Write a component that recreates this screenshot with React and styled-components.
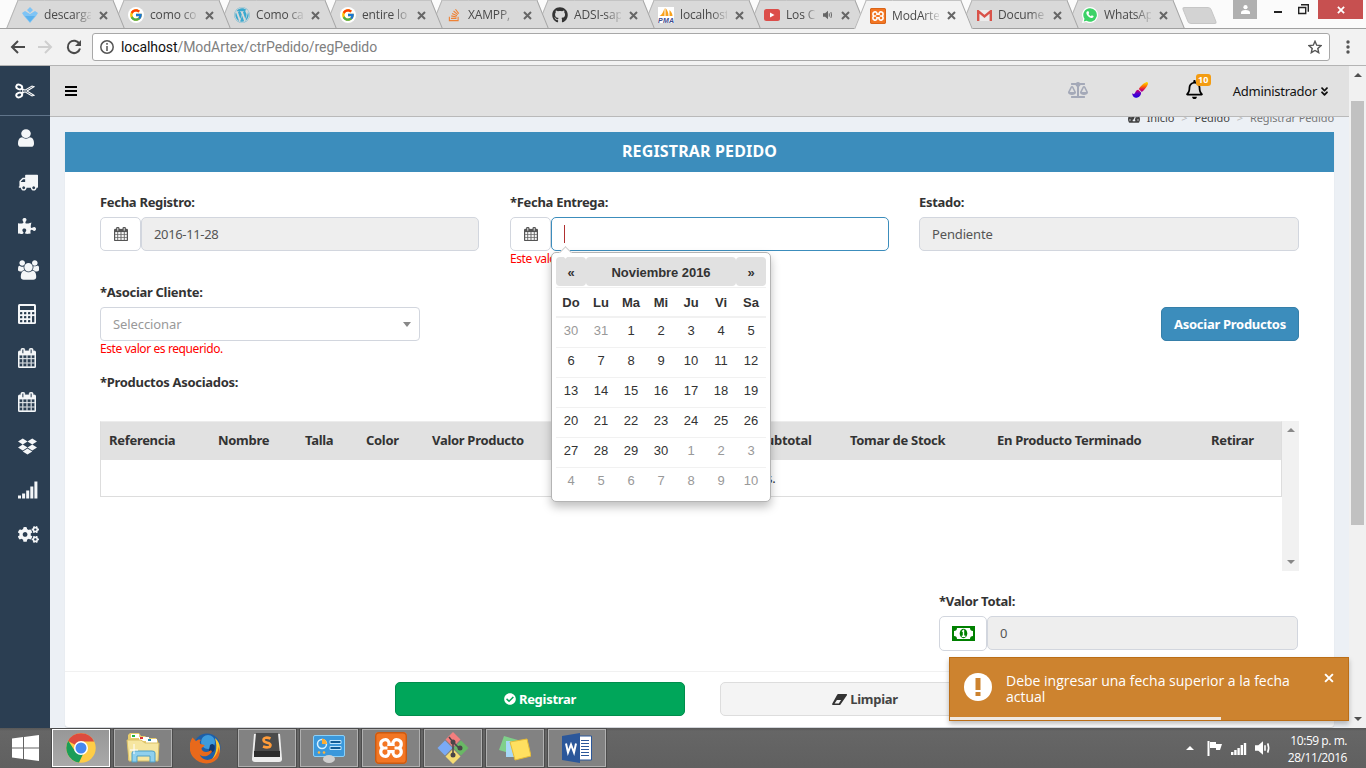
import React from "react";
import styled, { createGlobalStyle, css } from "styled-components";
import { FcGoogle } from "react-icons/fc";
import {
  FaWordpress, FaGithub, FaStackOverflow, FaPuzzlePiece, FaDropbox, FaCogs,
  FaBalanceScale, FaRegBell, FaAngleDoubleDown, FaCheckCircle, FaTachometerAlt,
} from "react-icons/fa";

const sans = `"Noto Sans", "Open Sans", sans-serif`;
const segoe = `"Open Sans", "Noto Sans", sans-serif`;

const Global = createGlobalStyle`
  * { box-sizing: border-box; }
  body { margin: 0; font-family: ${sans}; font-size: 13px; color: #333; overflow: hidden; }
  svg { display: block; flex: none; }
`;

/* ---------- browser frame ---------- */
const Screen = styled.div`
  width: 1366px; height: 768px; display: flex; flex-direction: column; overflow: hidden; background: #fff;
`;
const TabStrip = styled.div`
  height: 29px; flex: none; display: flex; padding-left: 6px; background: #fbfbfb;
  border-bottom: 1px solid #a0a0a0;
`;
const Tab = styled.div`
  position: relative; z-index: ${(p) => p.$z}; width: 119px; height: ${(p) => (p.$active ? 29 : 28)}px;
  margin-right: -13px; flex: none; display: flex; align-items: center; padding: 2px 0 0 16px;
  font: 12px ${segoe}; color: #4a4a4a;
  &::before, &::after {
    content: ""; position: absolute; z-index: -1; top: 0; bottom: 0; width: 68px;
    background: ${(p) => (p.$active ? "#f2f2f2" : "#d9d9d9")}; border-top: 1px solid #c4c4c4;
  }
  &::before { left: 6px; transform: skewX(-22deg); border-left: 1px solid #b4b4b4; }
  &::after { right: 6px; transform: skewX(22deg); border-right: 1px solid #a4a4a4; }
`;
const TabIcon = styled.span`
  width: 16px; height: 16px; margin-right: 6px; flex: none; display: grid; place-items: center;
`;
const TabText = styled.span`
  width: ${(p) => p.$w || 46}px; overflow: hidden; white-space: nowrap; line-height: 18px; flex: none;
  letter-spacing: -0.15px;
  mask-image: linear-gradient(90deg, #000 66%, rgba(0,0,0,.15));
`;
const CloseTab = styled.span`
  margin-left: 8px; flex: none;
`;
const NewTab = styled.div`
  width: 29px; height: 17px; margin: 7px 0 0 13px; border: 1px solid #c6c6c6; background: #d3d3d3;
  border-radius: 3px; transform: skewX(22deg);
`;
const WindowButtons = styled.div`
  margin-left: auto; margin-right: 3px; display: flex; align-items: flex-start;
`;
const UserBtn = styled.div`
  width: 24px; height: 19px; background: #b0b0b0; display: grid; place-items: center;
`;
const PlainBtn = styled.div`
  width: ${(p) => p.$w}px; height: 19px; display: flex; justify-content: flex-end; align-items: center;
`;
const CloseBtn = styled.div`
  width: 45px; height: 19px; margin-left: 9px; background: #c75050; display: grid; place-items: center;
`;
const Toolbar = styled.div`
  height: 37px; flex: none; display: flex; align-items: center; background: #f2f2f2;
  border-bottom: 1px solid #b4b4b4; padding: 0 13px 0 10px;
`;
const NavIcon = styled.span`
  width: 28px; flex: none;
`;
const Omnibox = styled.div`
  height: 28px; width: 1238px; margin: 0 auto 0 -2px; background: #fff; border: 1px solid #a8a8a8; border-radius: 3px;
  display: flex; align-items: center; padding: 0 7px;
  font: 14px Roboto, sans-serif; color: #808080; letter-spacing: -0.08px;
`;
const Url = styled.span`
  margin-left: 7px; flex: 1;
  b { font-weight: 400; color: #111; }
`;

/* ---------- page ---------- */
const Page = styled.div`
  height: 662px; flex: none; display: flex; overflow: hidden; background: #ecf0f5; position: relative;
`;
const Sidebar = styled.nav`
  width: 50px; flex: none; background: #2b3e52; color: #f4f6f8; display: flex; flex-direction: column;
`;
const SideLogo = styled.div`
  height: 50px; border-bottom: 1px solid #60748a; display: grid; place-items: center; flex: none;
`;
const SideItem = styled.div`
  height: 44px; display: flex; align-items: center; padding-left: 18px;
`;
const Main = styled.main`
  width: 1299px; flex: none; display: flex; flex-direction: column;
`;
const Header = styled.header`
  position: relative; z-index: 2; height: 51px; flex: none; background: #e1e1e1; border-bottom: 1px solid #b9b9b9;
  display: flex; align-items: center; padding: 0 19px 0 15px;
`;
const Spacer = styled.div` flex: 1; `;
const HeadIcon = styled.span`
  position: relative; margin-right: ${(p) => p.$mr}px; margin-top: -3px;
`;
const Badge = styled.span`
  position: absolute; left: 11px; top: -6px; width: 15px; height: 12px; border-radius: 3px; background: #f39c12;
  color: #fff; font: bold 9px/12px ${sans}; text-align: center;
`;
const UserName = styled.span`
  font-size: 13px; letter-spacing: -0.27px; color: #111; display: flex; align-items: center; gap: 2px; line-height: 20px;
`;
const Crumbs = styled.div`
  height: 16px; margin: -7px 15px 6px 0; flex: none; display: flex; justify-content: flex-end; align-items: center;
  font-size: 11px; line-height: 16px; letter-spacing: -0.1px; color: #444;
  i { font-style: normal; color: #bbb; margin: 0 7px; }
  em { font-style: normal; color: #777; }
  svg { margin-right: 7px; }
`;
const Box = styled.section`
  margin: 0 15px; height: 595px; flex: none; background: #fff; border-radius: 0 0 3px 3px;
  box-shadow: 0 1px 1px rgba(0,0,0,.12);
`;
const BoxTitle = styled.h3`
  margin: 0; height: 40px; background: #3c8dbc; color: #fff; text-align: center;
  font: bold 16px/38px ${sans}; letter-spacing: 0.15px;
`;
const BoxBody = styled.div`
  height: 499px; padding: 19px 35px 0;
`;
const Columns = styled.div`
  display: flex; height: 90px; column-gap: 31px;
`;
const Field = styled.div`
  position: relative; width: ${(p) => p.$w || 379}px; flex: none;
  &:last-child { margin-left: -1px; }
`;
const Label = styled.label`
  display: block; height: 26px; line-height: 22px; font-weight: bold; font-size: 13px; letter-spacing: -0.3px;
  white-space: nowrap;
`;
const Group = styled.div` display: flex; height: 34px; `;
const Addon = styled.span`
  width: ${(p) => p.$w || 41}px; height: ${(p) => p.$h || 34}px; border: 1px solid #d2d6de; border-radius: 5px; background: #fff; color: #555;
  display: grid; place-items: center; flex: none;
`;
const Input = styled.div`
  flex: 1; height: 34px; padding: 0 12px; border: 1px solid #d2d6de; border-radius: 5px; background: #eee; color: #555;
  font-size: 13px; line-height: 32px; letter-spacing: ${(p) => p.$ls || -0.15}px;
  ${(p) => p.$focus && css`background: #fff; border-color: #3c8dbc;`}
`;
const Caret = styled.span`
  display: block; width: 1px; height: 18px; margin-top: 7px; background: #b03030;
`;
const ErrorText = styled.div`
  color: #f00; font-size: 12px; line-height: 16px; letter-spacing: -0.4px; white-space: nowrap;
`;
const ClientRow = styled.div`
  display: flex; justify-content: space-between; height: 90px;
`;
const Select = styled.div`
  width: 320px; height: 34px; border: 1px solid #d2d6de; border-radius: 4px; background: #fff; color: #999;
  display: flex; align-items: center; justify-content: space-between; padding: 0 8px 0 12px; letter-spacing: -0.1px;
`;
const Arrow = styled.span`
  border: ${(p) => p.$s || 4}px solid transparent; flex: none; width: 0; height: 0;
  ${(p) => p.$up
    ? css`border-top: 0; border-bottom-color: ${p.$c || "#888"};`
    : css`border-bottom: 0; border-top-color: ${p.$c || "#888"};`}
  ${(p) => p.$tall && css`border-top-width: 5px;`}
`;
const Button = styled.div`
  width: ${(p) => p.$w}px; height: 34px; border-radius: 5px; display: flex; align-items: center; justify-content: center; gap: 3px;
  font-weight: bold; font-size: 13px; letter-spacing: -0.28px; border: 1px solid; flex: none;
  ${(p) => ({
    blue: css`background: #3c8dbc; border-color: #367fa9; color: #fff; margin-top: 26px;`,
    green: css`background: #00a65a; border-color: #008d4c; color: #fff;`,
    gray: css`background: #f4f4f4; border-color: #ddd; color: #444;`,
  })[p.$tone]}
`;
const TableArea = styled.div`
  display: flex; height: 150px; margin-top: 24px; width: 1199px;
`;
const Table = styled.div`
  width: 1182px; height: 76px; border: 1px solid #ddd; border-top-color: #ececec;
`;
const HeadRow = styled.div`
  display: grid; grid-template-columns: 109px 87px 61px 66px 130px 197px 91px 147px 214px 1fr;
  height: 38px; background: #e1e1e1; line-height: 36px; font-weight: bold; letter-spacing: -0.3px; white-space: nowrap;
  span { padding-left: 8px; }
`;
const EmptyRow = styled.div`
  height: 36px; line-height: 36px; text-align: center; letter-spacing: -0.25px;
`;
const InnerScroll = styled.div`
  width: 17px; background: #f1f1f1; display: flex; flex-direction: column; justify-content: space-between; align-items: center; padding: 7px 0;
`;
const TotalBlock = styled.div`
  width: 359px; margin: 19px 0 0 839px;
`;
const BoxFooter = styled.div`
  height: 56px; border-top: 1px solid #f1f1f1; padding: 10px 0 0 330px; display: flex; gap: 35px;
`;
const PageScroll = styled.div`
  width: 17px; background: #f1f1f1; display: flex; flex-direction: column; align-items: center; padding: 7px 0;
  flex: none;
`;
const Thumb = styled.div`
  width: 13px; height: 424px; margin: 24px 0 auto; background: #c1c1c1;
`;

/* ---------- floating calendar ---------- */
const Picker = styled.div`
  position: absolute; z-index: 3; left: 41px; top: 61px; width: 220px; height: 250px; background: #fff; border: 1px solid #b4b4b4;
  border-radius: 5px; padding: 4px; box-shadow: 0 5px 10px rgba(0,0,0,.25);
  font: 13px "Liberation Sans", Arial, sans-serif; color: #333;
  &::before {
    content: ""; position: absolute; width: 8px; height: 8px; left: 9px; top: -5px; background: #fff;
    border: solid #ccc; border-width: 1px 0 0 1px; transform: rotate(45deg);
  }
`;
const MonthRow = styled.div`
  display: grid; grid-template-columns: 30px 150px 30px; height: 30px; font-weight: bold; text-align: center; line-height: 31px;
  letter-spacing: -0.05px;
  span { background: #e1e1e1; border-radius: 4px; height: 29px; }
`;
const Days = styled.div`
  display: grid; grid-template-columns: repeat(7, 30px); height: 30px; line-height: 26px; text-align: center;
  border-top: 1px solid #f1f1f1;
  ${(p) => p.$head && css`font-weight: bold; border-bottom: 1px solid #f1f1f1; line-height: 29px;`}
`;
const Day = styled.span` color: ${(p) => (p.$muted ? "#999" : "#333")}; `;

/* ---------- notification ---------- */
const Toast = styled.div`
  position: absolute; z-index: 4; left: 949px; top: 591px; width: 400px; height: 64px; background: #cd832f; border: 1px solid #bb6e17;
  color: #fff; display: flex; justify-content: space-between; padding: 15px 14px 0 14px; box-shadow: 0 3px 5px rgba(0,0,0,.25);
  font: 14px/16px ${segoe};
`;
const ToastText = styled.div`
  width: 304px; letter-spacing: 0;
`;
const Progress = styled.div`
  position: absolute; left: 0; bottom: 0; height: 3px; width: 271px; background: #f0e9e2;
`;

/* ---------- taskbar ---------- */
const Taskbar = styled.div`
  height: 40px; flex: none; display: flex; align-items: center; gap: 4px; background: linear-gradient(#575757, #666 3px, #606060);
  color: #fff;
`;
const Start = styled.div` width: 48px; padding-left: 12px; `;
const Task = styled.div`
  width: 58px; height: 38px; display: grid; place-items: center; border: 1px solid transparent;
  ${(p) => p.$open && css`background: #828282; border-color: #b0b0b0; outline: 1px solid #4c4c4c;`}
  ${(p) => p.$active && css`background: linear-gradient(#979797, #a9a9a9); border-color: #fff;`}
`;
const Tray = styled.div` margin-left: auto; display: flex; align-items: center; gap: 8px; `;
const TrayArrow = styled.span` margin-right: 5px; `;
const Clock = styled.div`
  width: 66px; margin: 2px 19px 0 2px; font: 12px/17px ${segoe}; letter-spacing: -0.45px; text-align: right; white-space: nowrap;
`;

/* ---------- drawings ---------- */
const X = ({ s = 9, c = "#666", w = 2 }) => (
  <svg width={s} height={s} viewBox="0 0 9 9"><path d="M1 1l7 7M8 1L1 8" stroke={c} strokeWidth={w} fill="none" /></svg>
);
const Calendar = ({ w = 15, h = w, c = "currentColor" }) => (
  <svg width={w} height={h} viewBox="64 0 1664 1792" preserveAspectRatio="none" fill={c} stroke={c} strokeWidth="30">
    <path d="M192 1664h288v-288h-288v288zm352 0h320v-288h-320v288zm-352-352h288v-320h-288v320zm352 0h320v-320h-320v320zm-352-384h288v-288h-288v288zm736 736h320v-288h-320v288zm-384-736h320v-288h-320v288zm768 736h288v-288h-288v288zm-384-352h320v-320h-320v320zm-352-864v-288q0-13-9.5-22.5t-22.5-9.5h-64q-13 0-22.5 9.5t-9.5 22.5v288q0 13 9.5 22.5t22.5 9.5h64q13 0 22.5-9.5t9.5-22.5zm736 864h288v-320h-288v320zm-384-384h320v-288h-320v288zm384 0h288v-288h-288v288zm32-480v-288q0-13-9.5-22.5t-22.5-9.5h-64q-13 0-22.5 9.5t-9.5 22.5v288q0 13 9.5 22.5t22.5 9.5h64q13 0 22.5-9.5t9.5-22.5zm384-64v1280q0 52-38 90t-90 38h-1408q-52 0-90-38t-38-90v-1280q0-52 38-90t90-38h128v-96q0-66 47-113t113-47h64q66 0 113 47t47 113v96h384v-96q0-66 47-113t113-47h64q66 0 113 47t47 113v96h128q52 0 90 38t38 90z" />
  </svg>
);
const Scissors = () => (
  <svg width="20" height="16" viewBox="0 0 20 16" fill="none" stroke="#fff">
    <ellipse cx="4.2" cy="4" rx="3" ry="2.2" strokeWidth="2" transform="rotate(20 4.2 4)" />
    <ellipse cx="4.2" cy="12" rx="3" ry="2.2" strokeWidth="2" transform="rotate(-20 4.2 12)" />
    <path d="M7 5.500l3 1.700 7-4.200 2 .8-7 4.200 7 4.200-2 .8-7-4.200-3 1.700M7 5.500l1 2.500-1 2.500" strokeWidth="1.100" />
  </svg>
);
const User = () => (
  <svg width="16" height="18" viewBox="256 110 1280 1570" preserveAspectRatio="none" fill="currentColor">
    <path d="M1536 1399q0 109-62.5 187t-150.5 78h-854q-88 0-150.5-78t-62.5-187q0-85 8.5-160.5t31.5-152 58.5-131 94-89 134.5-34.5q131 128 313 128t313-128q76 0 134.5 34.5t94 89 58.5 131 31.5 152 8.5 160.5zm-256-887q0 159-112.5 271.5t-271.5 112.5-271.5-112.5-112.5-271.5 112.5-271.5 271.5-112.5 271.5 112.5 112.5 271.5z" />
  </svg>
);
const Truck = () => (
  <svg width="20" height="20" viewBox="0 0 1792 1792" fill="currentColor">
    <path d="M640 1408q0-52-38-90t-90-38-90 38-38 90 38 90 90 38 90-38 38-90zm-384-512h384v-256h-158q-13 0-22 9l-195 195q-9 9-9 22v30zm1280 512q0-52-38-90t-90-38-90 38-38 90 38 90 90 38 90-38 38-90zm256-1088v1024q0 15-4 26.5t-13.5 18.5-16.5 11.5-23.5 6-22.5 2-25.5 0-22.5-.5q0 106-75 181t-181 75-181-75-75-181h-384q0 106-75 181t-181 75-181-75-75-181h-64q-3 0-22.5.5t-25.5 0-22.5-2-23.5-6-16.5-11.5-13.5-18.5-4-26.5q0-26 19-45t45-19v-320q0-8-.5-35t0-38 2.5-34.5 6.5-37 14-30.5 22.5-30l198-198q19-19 50.5-32t58.5-13h160v-192q0-26 19-45t45-19h1024q26 0 45 19t19 45z" />
  </svg>
);
const Users = () => (
  <svg width="21" height="20" viewBox="0 0 1920 1792" fill="currentColor">
    <path d="M593 896q-162 5-265 128h-134q-82 0-138-40.5t-56-118.5q0-353 124-353 6 0 43.5 21t97.5 42.5 119 21.5q67 0 133-23-5 37-5 66 0 159 93 293zm1071 637q0 120-73 189.5t-194 69.5h-874q-121 0-194-69.5t-73-189.5q0-53 3.5-103.5t14-109 26.5-108.5 43-97.5 62-81 85.5-53.5 111.5-20q10 0 43 21.5t73 48 107 48 135 21.5 135-21.5 107-48 73-48 43-21.5q61 0 111.5 20t85.5 53.5 62 81 43 97.5 26.5 108.5 14 109 3.5 103.5zm-1024-1277q0 106-75 181t-181 75-181-75-75-181 75-181 181-75 181 75 75 181zm704 384q0 159-112.5 271.5t-271.5 112.5-271.5-112.5-112.5-271.5 112.5-271.5 271.5-112.5 271.5 112.5 112.5 271.5zm576 225q0 78-56 118.5t-138 40.5h-134q-103-123-265-128 93-134 93-293 0-29-5-66 66 23 133 23 59 0 119-21.5t97.5-42.5 43.5-21q124 0 124 353zm-128-609q0 106-75 181t-181 75-181-75-75-181 75-181 181-75 181 75 75 181z" />
  </svg>
);
const Calculator = () => (
  <svg width="18" height="20" viewBox="0 0 18 20">
    <rect width="18" height="20" rx="1.5" fill="#f4f6f8" />
    <g fill="#2c3e50">
      <rect x="2" y="2" width="14" height="4" />
      {[8, 12, 16].map((y) => [2, 6, 10].map((x) => <rect key={`${x}-${y}`} x={x} y={y} width="2.3" height="2.3" rx=".6" />))}
      <rect x="14" y="8" width="2.3" height="2.3" rx=".6" /><rect x="14" y="12" width="2.3" height="6.3" rx=".6" />
    </g>
  </svg>
);
const Signal = () => (
  <svg width="20" height="18" viewBox="0 0 20 18" fill="currentColor">
    {[3, 5, 8, 12, 17].map((h, i) => <rect key={h} x={i * 4.1} y={17.5 - h} width="3" height={h} />)}
  </svg>
);
const Brush = () => (
  <svg width="16" height="16" viewBox="0 0 16 16">
    <defs><linearGradient id="paint" gradientUnits="userSpaceOnUse" x1="0" y1="0" x2="0" y2="16">
      <stop offset="0" stopColor="#ffe600" /><stop offset=".28" stopColor="#ff6a00" /><stop offset=".5" stopColor="#d0006a" /><stop offset=".72" stopColor="#5a00c8" /><stop offset="1" stopColor="#1b00e0" />
    </linearGradient></defs>
    <path d="M14 .2c1.600-.5 2.400.8 1.800 2.200-1 2.200-3.700 6-6 7.600L6.800 7C8.300 4.500 11.700 1 14 .2zM6.200 7.700l2.900 2.700C9.200 14 6.500 16 3.700 15.800 1.400 15.600.3 13.500.1 11.300c1.800 1.200 2.600.6 3.200-1 .5-1.300 1.500-2.500 2.900-2.600z" fill="url(#paint)" />
  </svg>
);
const Eraser = () => (
  <svg width="15" height="11" viewBox="0 0 15 11"><path d="M6 0h8.500q.8.400.4 1.200L8.500 10.500q-.4.500-1 .5H.7q-.8-.4-.5-1.200L5.300.5zM2.600 9.400h4.200l2.300-3.300H4.900z" fill="#333" fillRule="evenodd" /></svg>
);
const Money = () => (
  <svg width="23" height="15" viewBox="0 0 23 15">
    <rect width="23" height="15" fill="#008000" />
    <path d="M5 2h13a3 3 0 003 3v5a3 3 0 00-3 3H5a3 3 0 00-3-3V5a3 3 0 003-3z" fill="#fff" />
    <ellipse cx="11.500" cy="7.500" rx="3.800" ry="4.700" fill="#008000" />
    <path d="M10 5.500l1.500-1v5.500M9.800 10.300h3.600" stroke="#fff" strokeWidth="1.400" fill="none" />
  </svg>
);
const Drop = () => (
  <svg width="16" height="16" viewBox="0 0 16 16" fill="#7fc4f5">
    <path d="M8 0l3 3-3 3-3-3zM0 6l3-2 5 3 5-3 3 2-2 3-6 7-6-7z" /><path d="M3 9h10l-5 6z" fill="#5cb2ee" />
  </svg>
);
const Pma = () => (
  <svg width="16" height="16" viewBox="0 0 16 16">
    <rect width="16" height="16" fill="#fff" /><path d="M6.500 1v8H1.500c2-1 4-4 5-8zM7.500 1c2 2 3 5 3 8h-3zM11.500 3c2 2 3 4 3 6h-3z" fill="#f8a11c" />
    <text x="0" y="16" fontSize="7" fontWeight="bold" fontStyle="italic" fontFamily="Liberation Sans" fill="#3c4a8c" textLength="16">PMA</text>
  </svg>
);
const YouTube = () => (
  <svg width="16" height="12" viewBox="0 0 16 12"><rect width="16" height="12" rx="2.500" fill="#dc4e4a" /><path d="M6 3.500v5l4.500-2.500z" fill="#fff" /></svg>
);
const Xampp = ({ s = 16 }) => (
  <svg width={s} height={s} viewBox="0 0 32 32">
    <rect width="32" height="32" rx="4" fill="#f37623" /><rect x=".7" y=".7" width="30.600" height="30.600" rx="3.500" fill="none" stroke="#c85a12" strokeWidth="1.400" />
    <path d="M8 16C5 14.500 4.800 9.500 8.500 8c3.500-1.200 6 1 5.500 4.500h4C17.500 9 20 6.800 23.500 8c3.700 1.500 3.500 6.500.5 8 3 1.500 3.200 6.500-.5 8-3.500 1.200-6-1-5.500-4.500h-4c.5 3.500-2 5.700-5.500 4.500C4.800 22.500 5 17.500 8 16zM9.500 16h3M19.500 16h3" fill="none" stroke="#fff" strokeWidth="3.200" />
  </svg>
);
const Gmail = () => (
  <svg width="15" height="11" viewBox="0 0 15 11"><rect width="15" height="11" rx="1" fill="#ececec" /><path d="M1.200 11V1.200L7.500 6.500l6.300-5.300V11" fill="none" stroke="#d9534a" strokeWidth="2.400" /></svg>
);
const WhatsIcon = () => (
  <svg width="16" height="16" viewBox="0 0 16 16"><path d="M8 0a8 8 0 110 16c-1.500 0-2.600-.3-3.800-1L0 16l1.100-4A8 8 0 018 0z" fill="#fff" /><path d="M8 1.200a6.800 6.800 0 11-3.500 12.600l-2.700.7.700-2.700A6.800 6.800 0 018 1.200z" fill="#3cd267" /><path d="M5.300 4.200l1.200.1.700 1.800-.7.900c.6 1.100 1.300 1.700 2.400 2.200l.9-1 1.800.9c0 1.500-1.200 2.200-2.500 1.900C6.600 10.400 4.500 8 4.300 6c0-.8.400-1.400 1-1.800z" fill="#fff" /></svg>
);
const GoogleIcon = () => (
  <svg width="16" height="16" viewBox="0 0 16 16"><circle cx="8" cy="8" r="8" fill="#fff" /><FcGoogle x="1" y="1" size={14} /></svg>
);
const Speaker = ({ c = "#666", s = 11 }) => (
  <svg width={s} height={s} viewBox="0 0 12 12"><path d="M0 4h2.500L6 1v10L2.500 8H0z" fill={c} /><path d="M7.500 4v4M9.500 2.500q1.500 3.500 0 7" stroke={c} fill="none" strokeWidth="1.200" /></svg>
);
const Chrome = () => (
  <svg width="30" height="30" viewBox="0 0 30 30">
    <circle cx="15" cy="15" r="14.700" fill="#ffcd46" />
    <path d="M15 15L2 8A14.700 14.700 0 0128.200 8.500H15z" fill="#dd4b3e" />
    <path d="M2.200 7.800L9.300 18.500l8 2L13 29.600A14.700 14.700 0 012.200 7.800z" fill="#1b9d58" />
    <circle cx="15" cy="15" r="7" fill="#fff" /><circle cx="15" cy="15" r="5.500" fill="#4688f1" />
  </svg>
);
const Folder = () => (
  <svg width="34" height="32" viewBox="0 0 34 32">
    <path d="M2 3l2-2h9l2 3h4l2 2h9l2 3v19H2z" fill="#e8cd6c" />
    <path d="M5 2h8v4H5zM13 5h10v4H13zM20 7h11v4H20z" fill="#fff" /><path d="M6 3h3v2H6z" fill="#1db33b" /><path d="M14 5h3v2h-3z" fill="#d33" /><path d="M22 7h3v2h-3z" fill="#28a" />
    <path d="M1 8h14l4 3h14l-1 18H3z" fill="#f6e6a0" stroke="#d9bf66" />
    <path d="M6 30V21q0-2 3-2h17q3 0 3 2v9h-5v-6H11v6z" fill="#8fd0ee" stroke="#4f9fc4" />
    <path d="M8 12v10M4 18h8" stroke="#fff" />
  </svg>
);
const Firefox = () => (
  <svg width="31" height="31" viewBox="0 0 31 31">
    <circle cx="17" cy="14" r="13.500" fill="#1d5fa8" /><circle cx="18" cy="9" r="7" fill="#3d9bdc" /><path d="M20 12c4-3 6 2 4 6l-6 4z" fill="#123a70" />
    <path d="M25 5c6 5 6 13 3 18-2 4-6 6-10 7 8-6 10-15 7-25z" fill="#fdc92f" />
    <path d="M3 5l3 3c1.500-1.500 4-2 5-1-1.500 1-1.500 3-.5 4l4 1c0 2-3 2-3 4 1 3 5 4 8 2 1.500-1 3 0 2 1.500-4 5-10 4.500-12 2 3 7 12 7 16 1 2-3 3-6 3-9 2 5 1 10-2 13-6 6-17 5-23-2-5-6-5-14-1-20z" fill="#e8691b" />
  </svg>
);
const Sublime = () => (
  <svg width="32" height="30" viewBox="0 0 32 30">
    <path d="M3 1h26l2 25q0 3-3 3H4q-3 0-3-3z" fill="#eee" /><path d="M5 0h22l2 22H3z" fill="#4b4b4b" /><path d="M3 18h26v6H3z" fill="#2d2d2d" />
    <path d="M19.500 5.500C16 4 12.500 4.500 12.500 7c0 3.500 7 2 7 5 0 2.700-4 2.900-7.500 1.500" fill="none" stroke="#ff9c3a" strokeWidth="2.600" />
  </svg>
);
const Panel = () => (
  <svg width="32" height="29" viewBox="0 0 32 29">
    <rect x=".5" y="1.500" width="31" height="21" rx="1.500" fill="#3b98db" stroke="#8bd0f8" />
    <circle cx="9" cy="10" r="4.500" fill="none" stroke="#d4f0ff" strokeWidth="1.500" /><path d="M9 10V4.500a5.500 5.500 0 015 5.500z" fill="#ffad33" />
    <path d="M17 6.500h11v3H17zM17 12.500h11v3H17z" fill="#115c96" stroke="#bfe6ff" /><circle cx="6" cy="18.500" r="1.300" fill="#ffb33a" /><circle cx="11" cy="18.500" r="1.300" fill="#ffb33a" />
    <ellipse cx="16" cy="25" rx="6" ry="4" fill="#cfcfcf" />
  </svg>
);
const Git = () => (
  <svg width="32" height="32" viewBox="0 0 32 32">
    <path d="M16 0l7.500 7.500L16 15 8.500 7.500z" fill="#f47e7e" /><path d="M8 8.500l7.500 7.500L8 23.500.5 16z" fill="#7aaaf5" /><path d="M24 8.500l7.500 7.500-7.500 7.500-7.500-7.500z" fill="#69b865" /><path d="M16 17l7.500 7.500L16 32l-7.500-7.500z" fill="#f5dc73" />
    <path d="M12 5l4 5v13M16 10l7 7" stroke="#4a4548" strokeWidth="1.500" fill="none" /><g fill="#4a4548"><circle cx="16" cy="10" r="2.500" /><circle cx="16" cy="23" r="2.500" /><circle cx="23" cy="16" r="2.500" /></g>
  </svg>
);
const Notes = () => (
  <svg width="32" height="26" viewBox="0 0 32 26">
    <path d="M5 1l14 4-5 14L0 15z" fill="#7fd08a" /><path d="M7 6h15v16H7z" fill="#a6d8f7" /><path d="M11 7l17-3 4 17-16 4z" fill="#ffe060" stroke="#e5bb36" />
  </svg>
);
const Word = () => (
  <svg width="30" height="30" viewBox="0 0 30 30">
    <path d="M17 3h12.500v24H17z" fill="#fff" stroke="#2b579a" /><path d="M19 7.500h8M19 10.500h8M19 13.500h8M19 16.500h8M19 19.500h8M19 22.500h8" stroke="#2b579a" />
    <path d="M0 3l18-3v30L0 27z" fill="#2b579a" /><path d="M4 10.500l2 9L9 11.500l3 8 2-9" fill="none" stroke="#fff" strokeWidth="2" />
  </svg>
);

const tabs = [
  ["descarga", <Drop />],
  ["como co", <GoogleIcon />],
  ["Como ca", <FaWordpress size={16} color="#3aa9cf" />],
  ["entire lo", <GoogleIcon />],
  ["XAMPP,", <FaStackOverflow size={14} color="#ef8236" />],
  ["ADSI-sap", <FaGithub size={16} color="#333" />],
  ["localhost", <Pma />],
  ["Los C", <YouTube />],
  ["ModArte", <Xampp />],
  ["Docume", <Gmail />],
  ["WhatsAp", <WhatsIcon />],
];
const sideIcons = [
  <User />, <Truck />, <FaPuzzlePiece size={18} />, <Users />, <Calculator />, <Calendar w={18} h={20} />, <Calendar w={18} h={20} />,
  <FaDropbox size={19} />, <Signal />, <FaCogs size={21} />,
];
const weeks = [
  [30, 31, 1, 2, 3, 4, 5], [6, 7, 8, 9, 10, 11, 12], [13, 14, 15, 16, 17, 18, 19],
  [20, 21, 22, 23, 24, 25, 26], [27, 28, 29, 30, 1, 2, 3], [4, 5, 6, 7, 8, 9, 10],
];
const isMuted = (w, d) => (w === 0 && d > 20) || (w > 3 && d < 20);
const headings = ["Referencia", "Nombre", "Talla", "Color", "Valor Producto", "", "Subtotal", "Tomar de Stock", "En Producto Terminado", "Retirar"];
const tasks = [
  [<Chrome />, true, true], [<Folder />, true], [<Firefox />, false], [<Sublime />, true], [<Panel />, true],
  [<Xampp s={32} />, true], [<Git />, true], [<Notes />, true], [<Word />, true],
];

export default function App() {
  return (
    <Screen>
      <Global />
      <TabStrip>
        {tabs.map(([text, icon], i) => (
          <Tab key={text} $z={i === 8 ? 20 : 12 - i} $active={i === 8}>
            <TabIcon>{icon}</TabIcon>
            <TabText $w={i === 7 ? 29 : 47}>{text}</TabText>
            {i === 7 && <CloseTab><Speaker s={10} /></CloseTab>}
            <CloseTab><X /></CloseTab>
          </Tab>
        ))}
        <NewTab />
        <WindowButtons>
          <UserBtn><svg width="9" height="9" viewBox="0 0 9 9" fill="#fff"><circle cx="4.500" cy="2.200" r="2.100" /><path d="M0 9V7.500Q0 5 4.500 5T9 7.500V9z" /></svg></UserBtn>
          <PlainBtn $w={25}><svg width="9" height="11"><path d="M1 8h8" stroke="#222" strokeWidth="2" /></svg></PlainBtn>
          <PlainBtn $w={27}><svg width="11" height="11" fill="none" stroke="#222"><path d="M.7 3.500h7v6h-7zM3 .7h7.300v7" strokeWidth="1.400" /></svg></PlainBtn>
          <CloseBtn><X s={8} c="#fff" w={2} /></CloseBtn>
        </WindowButtons>
      </TabStrip>
      <Toolbar>
        <NavIcon><svg width="15" height="14" fill="none" stroke="#4a4a4a" strokeWidth="2"><path d="M15 7H2M8 1L2 7l6 6" /></svg></NavIcon>
        <NavIcon><svg width="15" height="14" fill="none" stroke="#cfcfcf" strokeWidth="2"><path d="M0 7h13M7 1l6 6-6 6" /></svg></NavIcon>
        <NavIcon><svg width="16" height="16" fill="none" stroke="#4a4a4a" strokeWidth="2"><path d="M13.500 5A6.200 6.200 0 1014 9.500" /><path d="M15 1v6H9z" fill="#4a4a4a" stroke="none" /></svg></NavIcon>
        <Omnibox>
          <svg width="14" height="14" fill="none" stroke="#555" strokeWidth="1.500"><circle cx="7" cy="7" r="6.200" /><path d="M7 6v5M7 3v1.700" /></svg>
          <Url><b>localhost</b>/ModArtex/ctrPedido/regPedido</Url>
          <svg width="14" height="14" viewBox="0 0 14 14" fill="none" stroke="#555" strokeWidth="1.400"><path d="M7 1.300l1.700 3.900 4.300.4-3.200 2.900.9 4.200L7 10.500l-3.700 2.200.9-4.200L1 5.600l4.300-.4z" /></svg>
        </Omnibox>
        <svg width="10" height="14" fill="#555"><circle cx="5" cy="2" r="1.700" /><circle cx="5" cy="7" r="1.700" /><circle cx="5" cy="12" r="1.700" /></svg>
      </Toolbar>
      <Page>
        <Sidebar>
          <SideLogo><Scissors /></SideLogo>
          {sideIcons.map((icon, i) => <SideItem key={i}>{icon}</SideItem>)}
        </Sidebar>
        <Main>
          <Header>
            <svg width="12" height="10" fill="#000"><path d="M0 0h12v2H0zM0 4h12v2H0zM0 8h12v2H0z" /></svg>
            <Spacer />
            <HeadIcon $mr={44}><FaBalanceScale size={20} color="#a4a9b8" /></HeadIcon>
            <HeadIcon $mr={37}><Brush /></HeadIcon>
            <HeadIcon $mr={29}><FaRegBell size={19} color="#000" /><Badge>10</Badge></HeadIcon>
            <UserName>Administrador <FaAngleDoubleDown size={11} /></UserName>
          </Header>
          <Crumbs><FaTachometerAlt size={12} />Inicio<i>&gt;</i>Pedido<i>&gt;</i><em>Registrar Pedido</em></Crumbs>
          <Box>
            <BoxTitle>REGISTRAR PEDIDO</BoxTitle>
            <BoxBody>
              <Columns>
                <Field>
                  <Label>Fecha Registro:</Label>
                  <Group><Addon><Calendar w={14} /></Addon><Input $ls={-0.35}>2016-11-28</Input></Group>
                </Field>
                <Field>
                  <Label>*Fecha Entrega:</Label>
                  <Group><Addon><Calendar w={14} /></Addon><Input $focus><Caret /></Input></Group>
                  <ErrorText>Este valor es requerido.</ErrorText>
                  <Picker>
                    <MonthRow><span>«</span><span>Noviembre 2016</span><span>»</span></MonthRow>
                    <Days $head>{["Do", "Lu", "Ma", "Mi", "Ju", "Vi", "Sa"].map((d) => <Day key={d}>{d}</Day>)}</Days>
                    {weeks.map((week, w) => (
                      <Days key={w}>{week.map((d) => <Day key={d} $muted={isMuted(w, d)}>{d}</Day>)}</Days>
                    ))}
                  </Picker>
                </Field>
                <Field $w={380}>
                  <Label>Estado:</Label>
                  <Input>Pendiente</Input>
                </Field>
              </Columns>
              <ClientRow>
                <div>
                  <Label>*Asociar Cliente:</Label>
                  <Select>Seleccionar<Arrow $tall /></Select>
                  <ErrorText>Este valor es requerido.</ErrorText>
                </div>
                <Button $tone="blue" $w={138}>Asociar Productos</Button>
              </ClientRow>
              <Label>*Productos Asociados:</Label>
              <TableArea>
                <Table>
                  <HeadRow>{headings.map((h) => <span key={h}>{h}</span>)}</HeadRow>
                  <EmptyRow>No hay productos asociados.</EmptyRow>
                </Table>
                <InnerScroll><Arrow $up /><Arrow /></InnerScroll>
              </TableArea>
              <TotalBlock>
                <Label>*Valor Total:</Label>
                <Group><Addon $w={48} $h={35}><Money /></Addon><Input>0</Input></Group>
              </TotalBlock>
            </BoxBody>
            <BoxFooter>
              <Button $tone="green" $w={290}><FaCheckCircle size={12} />Registrar</Button>
              <Button $tone="gray" $w={290}><Eraser />Limpiar</Button>
            </BoxFooter>
          </Box>
        </Main>
        <PageScroll><Arrow $up $c="#505050" /><Thumb /><Arrow $c="#505050" /></PageScroll>
        <Toast>
          <svg width="28" height="28" viewBox="0 0 28 28"><circle cx="14" cy="14" r="14" fill="#fff" /><path d="M11.500 5h5v12h-5zM11.500 19h5v4h-5z" fill="#cd832f" /></svg>
          <ToastText>Debe ingresar una fecha superior a la fecha actual</ToastText>
          <X s={10} c="#fff" w={1.8} />
          <Progress />
        </Toast>
      </Page>
      <Taskbar>
        <Start><svg width="27" height="26" viewBox="0 0 27 26" fill="#fff"><path d="M0 3.500L11 2v10.500H0zM12 1.900L27 0v12.500H12zM0 13.500h11V24L0 22.500zM12 13.500h15V26l-15-1.900z" /></svg></Start>
        {tasks.map(([icon, open, active], i) => <Task key={i} $open={open} $active={active}>{icon}</Task>)}
        <Tray>
          <TrayArrow><Arrow as="div" $up $c="#fff" /></TrayArrow>
          <svg width="16" height="16" viewBox="0 0 16 16"><path d="M1.500 1v15" stroke="#fff" strokeWidth="2" /><path d="M3 2h6v2h6l-2 6H9V8H3z" fill="#fff" /></svg>
          <svg width="16" height="13" viewBox="0 0 16 13" fill="#fff">{[3, 5, 7, 10, 12].map((h, i) => <rect key={h} x={i * 3.2} y={13 - h} width="2.4" height={h} />)}</svg>
          <Speaker c="#fff" s={16} />
          <Clock>10:59 p. m.<br />28/11/2016</Clock>
        </Tray>
      </Taskbar>
    </Screen>
  );
}
